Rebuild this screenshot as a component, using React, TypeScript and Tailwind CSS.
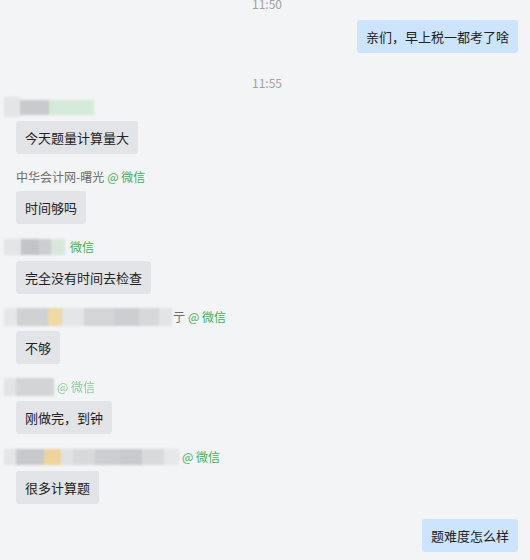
import React from "react";

type Block = { w: number; c: string; h?: number };

// pixelated / blurred nickname placeholders
const Mosaic = ({ blocks, h = 16 }: { blocks: Block[]; h?: number }) => (
  <div className="flex items-center -ml-[12px] blur-[1.2px] shrink-0">
    {blocks.map((b, i) => (
      <div key={i} style={{ width: b.w, height: b.h ?? h, background: b.c }} />
    ))}
  </div>
);

const Tag = ({ faded }: { faded?: boolean }) => (
  <span className={`text-[#45b05a] ml-[3px] ${faded ? "opacity-60 blur-[0.6px]" : ""}`}>@ 微信</span>
);

const Time = ({ t, className = "" }: { t: string; className?: string }) => (
  <div className={`h-4 leading-4 text-[12px] text-center text-[#a2a2a2] ${className}`}>{t}</div>
);

const Left = ({ children }: { children: React.ReactNode }) => (
  <div className="self-start mt-[6px] rounded-[3px] bg-[#e3e4e7] px-[9px] py-[7px] text-[13px] leading-[19px] text-[#222]">
    {children}
  </div>
);

const Right = ({ children, className = "" }: { children: React.ReactNode; className?: string }) => (
  <div className={`self-end rounded-[3px] bg-[#cde4fd] px-[9px] py-[7px] text-[13px] leading-[19px] text-[#222] ${className}`}>
    {children}
  </div>
);

const NameRow = ({ children, className = "" }: { children: React.ReactNode; className?: string }) => (
  <div className={`h-4 flex items-center text-[12px] leading-4 whitespace-nowrap ${className}`}>{children}</div>
);

export default function App() {
  return (
    <div className="min-h-screen bg-[#f3f4f6] overflow-hidden font-['Microsoft_YaHei','Noto_Sans_CJK_SC',sans-serif]">
      <div className="flex flex-col pl-[16px] pr-[12px] -mt-[4px]">
        <Time t="11:50" />
        <Right className="mt-[8px]">亲们，早上税一都考了啥</Right>

        <Time t="11:55" className="mt-[22px]" />

        <NameRow className="mt-[8px]">
          <Mosaic
            h={15}
            blocks={[
              { w: 16, c: "#e4e5e7", h: 20 },
              { w: 29, c: "#c9cacd" },
              { w: 45, c: "#d4ebd9" },
            ]}
          />
        </NameRow>
        <Left>今天题量计算量大</Left>

        <NameRow className="mt-[15px]">
          <span className="text-[#6c6c6c]">中华会计网-曙光</span>
          <Tag />
        </NameRow>
        <Left>时间够吗</Left>

        <NameRow className="mt-[15px]">
          <Mosaic
            blocks={[
              { w: 17, c: "#e4e5e7" },
              { w: 18, c: "#c3c4c7" },
              { w: 12, c: "#cdced1" },
              { w: 14, c: "#d9e6dc" },
            ]}
          />
          <span className="text-[#45b05a] ml-[5px]">微信</span>
        </NameRow>
        <Left>完全没有时间去检查</Left>

        <NameRow className="mt-[15px]">
          <Mosaic
            h={18}
            blocks={[
              { w: 13, c: "#e6e7e9" },
              { w: 31, c: "#d0d1d3" },
              { w: 14, c: "#efd9a4" },
              { w: 22, c: "#e4e5e7" },
              { w: 30, c: "#d4d5d7" },
              { w: 25, c: "#cdced1" },
              { w: 20, c: "#d7d8da" },
              { w: 13, c: "#e3e4e6" },
            ]}
          />
          <span className="text-[#6c6c6c] ml-[1px]">亍</span>
          <Tag />
        </NameRow>
        <Left>不够</Left>

        <NameRow className="mt-[15px]">
          <Mosaic
            h={18}
            blocks={[
              { w: 12, c: "#e3e4e6" },
              { w: 38, c: "#d3d4d6" },
            ]}
          />
          <Tag faded />
        </NameRow>
        <Left>刚做完，到钟</Left>

        <NameRow className="mt-[15px]">
          <Mosaic
            blocks={[
              { w: 12, c: "#e5e6e8" },
              { w: 28, c: "#c8c9cc" },
              { w: 17, c: "#efd39c" },
              { w: 12, c: "#e1e2e4" },
              { w: 22, c: "#d8d9db" },
              { w: 25, c: "#cdced1" },
              { w: 22, c: "#c9cacd" },
              { w: 22, c: "#d9dadc" },
              { w: 15, c: "#e6e7e9" },
            ]}
          />
          <Tag />
        </NameRow>
        <Left>很多计算题</Left>

        <Right className="mt-[15px]">题难度怎么样</Right>
      </div>
    </div>
  );
}
